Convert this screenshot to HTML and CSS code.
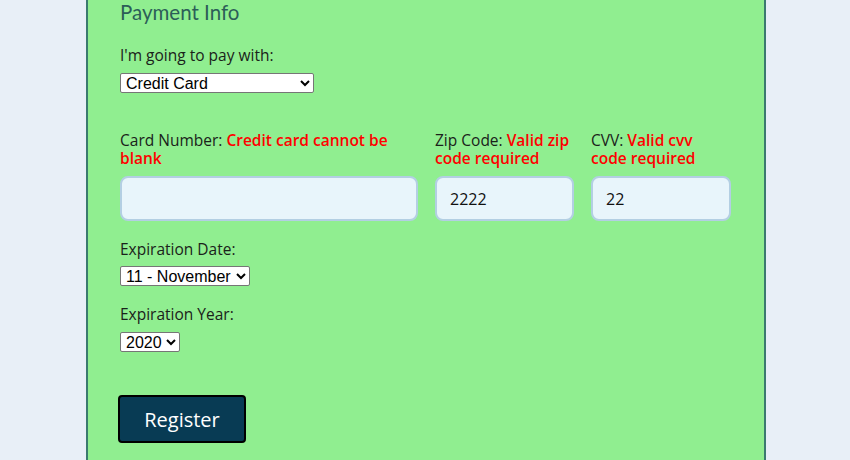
FILE: index.html
```html
<!DOCTYPE html>
<html lang="en">
<head>
<meta charset="utf-8">
<title>Payment Info</title>
<link rel="stylesheet" href="styles.css">
</head>
<body>
<div class="page">
  <form class="panel">
    <h2 class="heading">Payment Info</h2>
    <label class="label first" for="payment">I'm going to pay with:</label>
    <select id="payment" class="select select-pay">
      <option>Select Payment Method</option>
      <option selected>Credit Card</option>
      <option>PayPal</option>
      <option>Bitcoin</option>
    </select>

    <div class="card-row">
      <div class="field">
        <label class="label two" for="cc">Card Number: <span class="err">Credit card cannot be blank</span></label>
        <input id="cc" class="input" type="text" value="">
      </div>
      <div class="field">
        <label class="label two" for="zip">Zip Code: <span class="err">Valid zip code required</span></label>
        <input id="zip" class="input" type="text" value="2222">
      </div>
      <div class="field">
        <label class="label two" for="cvv">CVV: <span class="err">Valid cvv code required</span></label>
        <input id="cvv" class="input" type="text" value="22">
      </div>
    </div>

    <label class="label exp" for="month">Expiration Date:</label>
    <select id="month" class="select select-month">
      <option>11 - November</option>
    </select>

    <label class="label exp" for="year">Expiration Year:</label>
    <select id="year" class="select select-year">
      <option>2020</option>
    </select>

    <button class="btn" type="button">Register</button>
  </form>
</div>
</body>
</html>
```
FILE: styles.css
```css
html, body {
  margin: 0;
  padding: 0;
  background: #e8eff7;
  height: 100%;
  overflow: hidden;
}

.page {
  display: flex;
  justify-content: center;
  padding-left: 2px;
}

.panel {
  width: 680px;
  min-height: 470px;
  box-sizing: border-box;
  background: #90ee90;
  border-left: 2px solid #3b7a6f;
  border-right: 2px solid #3b7a6f;
  padding: 0 32px 0 32px;
  display: flex;
  flex-direction: column;
  align-items: flex-start;
  font-family: "Open Sans", "Noto Sans", sans-serif;
  color: #1a221a;
}

.heading {
  margin: 0;
  font-family: "Lato", "Open Sans", sans-serif;
  font-size: 20.5px;
  font-weight: 400;
  line-height: 24px;
  color: #2c5e58;
}

.label {
  display: block;
  font-size: 15.5px;
  line-height: 18px;
}

.label.first {
  margin-top: 22px;
}

.label.exp {
  margin-top: 19px;
}

.err {
  color: #ff0000;
  font-weight: 600;
}

.select {
  margin-top: 9px;
  height: 20px;
  box-sizing: border-box;
  font-family: "Liberation Sans", Arial, sans-serif;
  font-size: 16px;
  color: #000;
  background: #fff;
  border: 1px solid #767676;
  border-radius: 2px;
  padding: 0 0 0 1px;
}

.select-pay { width: 194px; }
.select-month { width: 130px; margin-top: 8px; }
.select-year { width: 60px; }

.card-row {
  margin-top: 38px;
  display: grid;
  grid-template-columns: 298px 139px 140px;
  column-gap: 17px;
  width: 100%;
}

.field {
  display: flex;
  flex-direction: column;
}

.label.two {
  min-height: 36px;
}

.input {
  margin-top: 9px;
  height: 45px;
  box-sizing: border-box;
  width: 100%;
  border: 2px solid #b3cfe3;
  border-radius: 8px;
  background: #e8f5fb;
  padding: 0 13px;
  font-family: "Open Sans", "Noto Sans", sans-serif;
  font-size: 16px;
  color: #111;
  outline: none;
}

.btn {
  margin-top: 43px;
  margin-left: -2px;
  width: 128px;
  height: 48px;
  box-sizing: border-box;
  background: #083b54;
  color: #fff;
  border: 2px solid #000;
  border-radius: 4px;
  font-family: "Open Sans", "Noto Sans", sans-serif;
  font-size: 20px;
  cursor: pointer;
}
```
